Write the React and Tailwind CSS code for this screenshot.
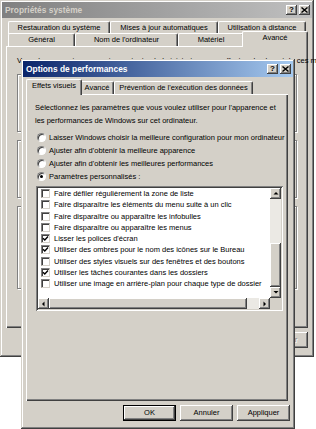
import React from 'react';

const raised = 'bg-[#d4d0c8] shadow-[inset_-1px_-1px_#404040,inset_1px_1px_#ffffff,inset_-2px_-2px_#808080,inset_2px_2px_#d4d0c8]';
const frame = 'bg-[#d4d0c8] shadow-[inset_-1px_-1px_#404040,inset_1px_1px_#d4d0c8,inset_-2px_-2px_#808080,inset_2px_2px_#ffffff]';
const sunken = 'bg-white shadow-[inset_1px_1px_#808080,inset_-1px_-1px_#ffffff,inset_2px_2px_#404040,inset_-2px_-2px_#d4d0c8]';
const panel = 'bg-[#d4d0c8] shadow-[inset_1px_1px_#ffffff,inset_-1px_-1px_#404040,inset_-2px_-2px_#808080]';

const CaptionButtons = () => (
    <div className="flex items-center gap-[2px] pr-[2px]">
        <div className={`${raised} w-[11px] h-[10px] flex items-center justify-center text-[8px] font-bold leading-none text-black`}>?</div>
        <div className={`${raised} w-[11px] h-[10px] flex items-center justify-center`}>
            <svg width="7" height="6" viewBox="0 0 7 6">
                <path d="M0.5 0.5 L6.5 5.5 M6.5 0.5 L0.5 5.5" stroke="#000" strokeWidth="1.4" />
            </svg>
        </div>
    </div>
);

const TitleBar = ({ title, active }) => (
    <div
        className={`h-[16px] flex items-center justify-between pl-[3px] shrink-0 ${
            active
                ? 'bg-[linear-gradient(90deg,#0a246a,#a6caf0)]'
                : 'bg-[linear-gradient(90deg,#808080,#c0c0c0)]'
        }`}
    >
        <span className={`text-[8.4px] font-bold ${active ? 'text-white' : 'text-[#d4d0c8]'}`}>{title}</span>
        <CaptionButtons />
    </div>
);

const Tab = ({ label, w, selected }) => (
    <div
        className={`relative flex items-start justify-center rounded-t-[2px] border-t border-l border-white border-r border-r-[#404040] shadow-[inset_-1px_0_#808080] bg-[#d4d0c8] ${
            selected ? 'z-10 h-[16px] -mx-[2px] -mb-px pt-[1px]' : 'h-[13px] pt-[1px]'
        }`}
        style={{ width: selected ? w + 4 : w }}
    >
        <span className="leading-[10px] whitespace-nowrap">{label}</span>
    </div>
);

const Button = ({ label, isDefault, disabled }) => (
    <div
        className={`w-[53px] h-[16px] flex items-center justify-center ${
            isDefault
                ? 'bg-[#d4d0c8] shadow-[inset_0_0_0_1px_#000,inset_-2px_-2px_#404040,inset_2px_2px_#ffffff,inset_-3px_-3px_#808080]'
                : raised
        } ${disabled ? 'text-[#808080] [text-shadow:1px_1px_#ffffff]' : ''}`}
    >
        {label}
    </div>
);

const Radio = ({ label, checked }) => (
    <div className="h-[13px] flex items-center ml-[2px]">
        <div className="w-[9px] h-[9px] rounded-full bg-white border border-[#808080] border-r-white border-b-white flex items-center justify-center shadow-[inset_1px_1px_#404040]">
            {checked && <div className="w-[3px] h-[3px] rounded-full bg-black" />}
        </div>
        <span className="ml-[3px] whitespace-nowrap">{label}</span>
    </div>
);

const Check = ({ label, checked }) => (
    <div className="h-[11.25px] flex items-center pl-[3px]">
        <div className="w-[9px] h-[9px] shrink-0 bg-white border border-[#808080] border-r-[#d4d0c8] border-b-[#d4d0c8] shadow-[inset_1px_1px_#404040] flex items-center justify-center">
            {checked && (
                <svg width="7" height="7" viewBox="0 0 7 7">
                    <path d="M1 3.2 L2.8 5 L6 1.6" fill="none" stroke="#000" strokeWidth="1.4" />
                </svg>
            )}
        </div>
        <span className="ml-[4px] leading-[9px] whitespace-nowrap">{label}</span>
    </div>
);

const Arrow = ({ dir }) => {
    const d = {
        up: 'M0.5 3.5 L3 1 L5.5 3.5 Z',
        down: 'M0.5 1 L3 3.5 L5.5 1 Z',
        left: 'M3.5 0.5 L1 3 L3.5 5.5 Z',
        right: 'M1.5 0.5 L4 3 L1.5 5.5 Z',
    }[dir];
    return (
        <div className={`${raised} w-[11px] h-[11px] shrink-0 flex items-center justify-center`}>
            <svg width="6" height="6" viewBox="0 0 6 6">
                <path d={d} fill="#000" />
            </svg>
        </div>
    );
};

const effects = [
    ['Faire défiler régulièrement la zone de liste', false],
    ['Faire disparaître les éléments du menu suite à un clic', false],
    ['Faire disparaître ou apparaître les infobulles', false],
    ['Faire disparaître ou apparaître les menus', false],
    ["Lisser les polices d'écran", true],
    ['Utiliser des ombres pour le nom des icônes sur le Bureau', true],
    ['Utiliser des styles visuels sur des fenêtres et des boutons', false],
    ['Utiliser les tâches courantes dans les dossiers', true],
    ['Utiliser une image en arrière-plan pour chaque type de dossier', false],
];

const GroupBox = ({ title, h }) => (
    <div className="relative mt-[8px] border border-[#808080] shadow-[1px_1px_#ffffff,inset_1px_1px_#ffffff]" style={{ height: h }}>
        <span className="absolute -top-[6px] left-[6px] px-[1px] bg-[#d4d0c8] leading-[10px]">{title}</span>
    </div>
);

const BackWindow = () => (
    <div className={`absolute left-0 top-0 w-[314px] h-[357px] p-[2px] flex flex-col ${frame}`}>
        <TitleBar title="Propriétés système" />
        <div className="pl-[4px] pt-[3px] flex flex-col">
            <div className="flex items-end pl-[2px] h-[13px]">
                <Tab label="Restauration du système" w={102} />
                <Tab label="Mises à jour automatiques" w={108} />
                <Tab label="Utilisation à distance" w={88} />
            </div>
            <div className="flex items-end pl-[2px] h-[12px]">
                <Tab label="Général" w={67} />
                <Tab label="Nom de l'ordinateur" w={103} />
                <Tab label="Matériel" w={66} />
                <Tab label="Avancé" w={62} selected />
            </div>
            <div className={`w-[302px] h-[282px] ${panel} px-[11px] pt-[10px] flex flex-col`}>
                <p className="leading-[10px] whitespace-nowrap">
                    Vous devez ouvrir une session en tant qu'administrateur pour effectuer la plupart de ces modifications.
                </p>
                <GroupBox title="Performances" h={58} />
                <GroupBox title="Profil des utilisateurs" h={58} />
                <GroupBox title="Démarrage et récupération" h={83} />
            </div>
        </div>
        <div className="flex justify-end gap-[4px] w-[306px] mt-[4px]">
            <Button label="OK" />
            <Button label="Annuler" />
            <Button label="Appliquer" disabled />
        </div>
    </div>
);

const PerfDialog = () => (
    <div className={`absolute left-[21px] top-[59px] w-[274px] h-[370px] p-[2px] flex flex-col ${frame}`}>
        <TitleBar title="Options de performances" active />
        <div className="pl-[3px] pt-[2px] flex flex-col">
            <div className="flex items-end pl-[2px] h-[15px]">
                <Tab label="Effets visuels" w={52} selected />
                <Tab label="Avancé" w={34} />
                <Tab label="Prévention de l'exécution des données" w={139} />
            </div>
            <div className={`w-[262px] h-[307px] ${panel} pl-[9px] pt-[7px] flex flex-col`}>
                <p className="leading-[13px]">
                    Sélectionnez les paramètres que vous voulez utiliser pour l'apparence et
                    <br />
                    les performances de Windows sur cet ordinateur.
                </p>
                <div className="mt-[4px] flex flex-col">
                    <Radio label="Laisser Windows choisir la meilleure configuration pour mon ordinateur" />
                    <Radio label="Ajuster afin d'obtenir la meilleure apparence" />
                    <Radio label="Ajuster afin d'obtenir les meilleures performances" />
                    <Radio label="Paramètres personnalisés :" checked />
                </div>
                <div className={`mt-[3px] ml-[1px] w-[247px] h-[125px] p-[2px] ${sunken}`}>
                    <div className="grid grid-cols-[1fr_11px] grid-rows-[1fr_11px] w-full h-full">
                        <div className="overflow-hidden">
                            {effects.map(([label, checked]) => (
                                <Check key={label} label={label} checked={checked} />
                            ))}
                        </div>
                        <div className="flex flex-col bg-[#ebe9e4]">
                            <Arrow dir="up" />
                            <div className="flex-1" />
                            <div className={`${raised} h-[44px]`} />
                            <Arrow dir="down" />
                        </div>
                        <div className="flex bg-[#ebe9e4]">
                            <Arrow dir="left" />
                            <div className={`${raised} w-[198px]`} />
                            <div className="flex-1" />
                            <Arrow dir="right" />
                        </div>
                        <div className="bg-[#d4d0c8]" />
                    </div>
                </div>
            </div>
        </div>
        <div className="flex justify-end gap-[4px] w-[267px] mt-[4px]">
            <Button label="OK" isDefault />
            <Button label="Annuler" />
            <Button label="Appliquer" />
        </div>
    </div>
);

export default function App() {
    return (
        <div className="relative w-[316px] h-[429px] bg-white overflow-hidden text-[7.5px] text-black font-['Liberation_Sans',Arial,sans-serif]">
            <BackWindow />
            <PerfDialog />
        </div>
    );
}
